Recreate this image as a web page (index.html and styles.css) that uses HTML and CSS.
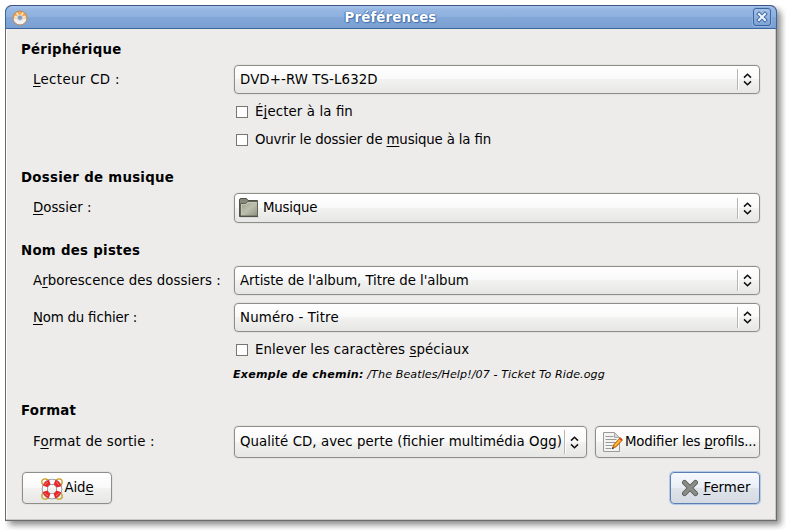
FILE: index.html
```html
<!DOCTYPE html>
<html lang="fr">
<head>
<meta charset="utf-8">
<title>Préférences</title>
<link rel="stylesheet" href="styles.css">
</head>
<body>
<svg width="0" height="0" class="defs" aria-hidden="true">
  <defs>
    <symbol id="arrows" viewBox="0 0 9 13"><path d="M1 4.600 4.500 1.200 8 4.600M1 8.400l3.500 3.400L8 8.400" fill="none" stroke="#111" stroke-width="1.500"/></symbol>
    <linearGradient id="folderFill" x1="0" y1="0" x2="1" y2="1"><stop offset="0" stop-color="#9b9d8a"/><stop offset=".5" stop-color="#bdbfae"/><stop offset="1" stop-color="#8f917f"/></linearGradient>
    <linearGradient id="discFill" x1="0" y1="0" x2="0" y2="1"><stop offset=".4" stop-color="#f7a94c"/><stop offset=".62" stop-color="#f4f2ee"/></linearGradient>
  </defs>
</svg>
<div class="window">
  <header class="titlebar">
    <svg class="app-icon" viewBox="0 0 16 16"><circle cx="8" cy="8" r="7" fill="url(#discFill)" stroke="#b8865a"/><path d="M2.500 6.500 8 8 4.500 2.800M11 2.500 8 8l5.500-1.500" fill="none" stroke="#fff0d8" stroke-width="1.400"/><circle cx="8" cy="7.700" r="2.600" fill="#7f9dc0" stroke="#d3d9df"/></svg>
    <h1>Préférences</h1>
    <button class="close" aria-label="Fermer"><svg viewBox="0 0 12 12"><path d="M3 3l6 6M9 3 3 9" stroke="#3d66a0" stroke-width="4" stroke-linecap="square"/><path d="M3 3l6 6M9 3 3 9" stroke="#eef4fc" stroke-width="2.200" stroke-linecap="square"/></svg></button>
  </header>
  <main class="content">
    <section>
      <h2>Périphérique</h2>
      <div class="row"><label class="t-cd"><u>L</u>ecteur CD :</label><div class="combo"><span class="t-dvd">DVD+-RW TS-L632D</span><i></i><svg class="arrows"><use href="#arrows"/></svg></div></div>
      <div class="check"><b></b><span class="t-eject">É<u>j</u>ecter à la <em>fi</em>n</span></div>
      <div class="check second"><b></b><span class="t-open">Ouvrir le dossier de <u>m</u>usique à la <em>fi</em>n</span></div>
    </section>
    <section>
      <h2>Dossier de musique</h2>
      <div class="row folder-row"><label><u>D</u>ossier :</label><div class="combo with-icon">
        <svg class="folder" viewBox="0 0 20 20"><path d="M1 19h19" stroke="#999" opacity=".5"/><path d="M.5 18.500V2q0-1.500 1.500-1.500h5.500L9 2.500h9.500v16z" fill="#85877a" stroke="#50524a"/><path d="M1.500 18V5.500h5l2-2h10V18z" fill="url(#folderFill)" stroke="#606256"/><path d="M2.500 17V6.500h4.500l2-2h8.500" fill="none" stroke="#c9cbbb" opacity=".8"/><path d="M.5 18.500h18" stroke="#50524a"/></svg>
        <span class="t-music">Musique</span><i></i><svg class="arrows"><use href="#arrows"/></svg></div></div>
    </section>
    <section class="tracks">
      <h2>Nom des pistes</h2>
      <div class="row"><label class="t-tree">A<u>r</u>borescence des dossiers :</label><div class="combo"><span class="t-artist">Artiste de l'album, Titre de l'album</span><i></i><svg class="arrows"><use href="#arrows"/></svg></div></div>
      <div class="row next"><label class="t-file"><u>N</u>om du <em>fi</em>chier :</label><div class="combo"><span class="t-num">Numéro - Titre</span><i></i><svg class="arrows"><use href="#arrows"/></svg></div></div>
      <div class="check third"><b></b><span class="t-strip">Enlever les caractères <u>s</u>péciaux</span></div>
      <p class="example"><strong>Exemple de chemin:</strong> /The Beatles/Help!/07 - Ticket To Ride.ogg</p>
    </section>
    <section>
      <h2>Format</h2>
      <div class="row format-row"><label class="t-out">F<u>o</u>rmat de sortie :</label><div class="combo"><span class="t-quality">Qualité CD, avec perte (<em>fi</em>chier multimédia Ogg)</span><i></i><svg class="arrows"><use href="#arrows"/></svg></div>
        <button class="btn edit"><svg class="edit-icon" viewBox="0 0 22 22"><path d="M2.500 1.500h11l5 5v14h-16z" fill="#f4f4f2" stroke="#999b97" stroke-linejoin="round"/><path d="M13.500 1.500v5h5z" fill="#d5d6d3" stroke="#aaa"/><path d="M4.500 5.500h8M4.500 8.500h11M4.500 11.500h10M4.500 14.500h8M4.500 17.500h6" stroke="#999b97"/><path d="m11.500 17.500 1.300-4 6-6.500 2.500 2.200-6 6.500z" fill="#f58b12" stroke="#b45a0a" stroke-width=".8"/><path d="m14 14.500 5-5.500" stroke="#ffc65a" stroke-width="1.200"/><path d="m18 7.500 1.300-1.300 2.400 2.200-1.200 1.400z" fill="#d33c1c"/><path d="m11 18.200 2-.9-1.300-1.200z" fill="#222"/></svg><span class="t-edit">Modi<em>fi</em>er les <u>p</u>ro<em>fi</em>ls...</span></button></div>
    </section>
    <footer>
      <button class="btn help"><svg class="help-icon" viewBox="0 0 22 22"><g fill="none" stroke="#c99b12" stroke-width="1.300"><circle cx="4" cy="4" r="3.200"/><circle cx="18" cy="4" r="3.200"/><circle cx="4" cy="18" r="3.200"/><circle cx="18" cy="18" r="3.200"/></g><circle cx="11" cy="11" r="7.300" fill="none" stroke="#8d8d8d" stroke-width="6"/><circle cx="11" cy="11" r="7.300" fill="none" stroke="#fafafa" stroke-width="4.400"/><circle cx="11" cy="11" r="7.300" fill="none" stroke="#e8262a" stroke-width="5" stroke-dasharray="6.600 4.867" stroke-dashoffset="-2.430"/><path d="M4 6.800l2.800-2.800M15.200 4l2.800 2.800M4 15.200l2.800 2.800M15.200 18l2.800-2.800" stroke="#f7908c" stroke-width=".9"/></svg><span class="t-help">Aid<u>e</u></span></button>
      <button class="btn primary"><svg class="x-icon" viewBox="0 0 18 18"><path d="m3.500 3.500 11 11m0-11-11 11" stroke="#5b5d58" stroke-width="5" stroke-linecap="round"/><path d="m3.500 3.500 11 11m0-11-11 11" stroke="#8a8c86" stroke-width="3.200" stroke-linecap="round"/></svg><span><u>F</u>ermer</span></button>
    </footer>
  </main>
</div>
</body>
</html>
```
FILE: styles.css
```css
* { box-sizing: border-box; }
body {
  margin: 0;
  padding: 5px;
  height: 530px;
  overflow: hidden;
  background: #fff;
  font: 13.33px/18px "DejaVu Sans", sans-serif;
  color: #000;
}
.defs { position: absolute; }
u { text-decoration: underline; text-decoration-thickness: 1px; text-underline-offset: 2px; text-decoration-skip-ink: none; }
/* keeps the fi ligature inside letter-spaced labels */
em { font-style: normal; letter-spacing: 0; }
.window {
  width: 772px;
  height: 516px;
  border: 1px solid #6b6b69;
  border-top: 0;
  border-radius: 7px 7px 0 0;
  background: #edeceb;
  box-shadow: 4px 4px 6px rgba(0, 0, 0, .45), inset -1px -1px #cbc9c7, inset 1px 0 #fff;
  clip-path: inset(0 -20px -20px 0);
}
.titlebar {
  display: flex;
  align-items: center;
  height: 24px;
  margin: 0 -1px;
  padding: 0 5px 0 6px;
  border: 1px solid #3b659f;
  border-top-color: #395682;
  border-radius: 7px 7px 0 0;
  background: linear-gradient(#a9c5ec 0, #98b8e3 3px, #8db0de 48%, #82a7d7 52%, #7a9fd1);
}
.app-icon { width: 16px; height: 16px; margin-top: 1px; }
h1 {
  flex: 1;
  margin: 1px 0 0;
  text-align: center;
  font-size: 13.33px;
  line-height: 20px;
  letter-spacing: .15px;
  color: #fff;
  text-shadow: 0 0 1px #3c66a2, 1px 1px 1px #4570ac, -1px 0 1px #4f7ab4;
}
.close {
  display: grid;
  place-items: center;
  width: 18px;
  height: 18px;
  padding: 0;
  border: 1px solid #3b659f;
  border-radius: 3px;
  background: linear-gradient(#a4c0e8, #7ea3d4);
  box-shadow: 0 0 0 1px #8fb2e0;
}
.close svg { width: 12px; height: 12px; }
.content { padding: 12px 16px 0 15px; }
section + section { margin-top: 20px; }
section.tracks { margin-top: 19px; }
h2 { margin: 0 0 6px; font-size: 13.33px; line-height: 18px; letter-spacing: .28px; }
.row { display: flex; height: 29px; }
.next { margin-top: 8px; }
.folder-row { height: 30px; }
.format-row { height: 32px; }
.row label { flex: 0 0 213px; padding-left: 12px; align-self: center; white-space: nowrap; }
.combo {
  display: flex;
  flex: 1;
  align-items: center;
  padding: 0 7px 0 5px;
  border: 1px solid #8e8d8a;
  border-radius: 4px;
  background: linear-gradient(#fff, #f9f9f9 50%, #f2f2f1 50%, #e6e6e4);
  box-shadow: 0 0 0 1px #e3e2e0;
  white-space: nowrap;
}
.combo > span { flex: 1; }
.combo i { width: 1px; height: 21px; background: #b8b6b3; margin-right: 5px; box-shadow: 1px 0 #fff; }
.format-row .combo i { height: 24px; }
.arrows { width: 9px; height: 13px; }
.with-icon { padding-left: 4px; }
.folder { width: 20px; height: 20px; margin-right: 4px; }
.check { display: flex; align-items: center; height: 18px; margin: 9px 0 0 215px; }
.check.second { margin-top: 10px; }
.check.third { margin-top: 9px; }
.check b { width: 12px; height: 12px; margin-right: 7px; border: 1px solid #767572; background: #fff; }
.example { margin: 8px 0 -1px 212px; font-size: 11.1px; line-height: 16px; font-style: italic; letter-spacing: .1px; white-space: nowrap; }
.example strong { letter-spacing: .26px; }
.btn {
  display: flex;
  align-items: center;
  justify-content: center;
  height: 32px;
  padding: 0;
  border: 1px solid #8e8d8a;
  border-radius: 4px;
  background: linear-gradient(#fff, #f9f9f9 50%, #f2f2f1 50%, #e6e6e4);
  box-shadow: 0 0 0 1px #e3e2e0;
  font: inherit;
  color: #000;
  white-space: nowrap;
}
.edit { width: 165px; margin-left: 8px; justify-content: flex-start; padding-left: 5px; }
.edit-icon, .help-icon { width: 22px; height: 22px; margin-right: 2px; }
.help-icon { margin-top: 1px; }
footer { display: flex; justify-content: space-between; margin: 14px 0 0 1px; }
footer .btn { width: 90px; }
.primary {
  border-color: #5b7fb3;
  background: linear-gradient(#f6f9fe, #e9eef6 50%, #dfe3ea 50%, #d5d9e1);
  box-shadow: 0 0 0 1px #b6c9e4;
}
.btn.primary { padding-left: 2px; }
.x-icon { width: 18px; height: 18px; margin-right: 4px; }

/* per-label tracking */
.t-cd { letter-spacing: .36px; }
.t-dvd { letter-spacing: .1px; }
.t-eject { letter-spacing: .12px; }
.t-open { letter-spacing: -.16px; }
.t-music { letter-spacing: -.2px; }
.t-tree { letter-spacing: .04px; }
.t-artist { letter-spacing: -.06px; }
.t-file { letter-spacing: -.2px; }
.t-num { letter-spacing: .18px; }
.t-strip { letter-spacing: .1px; }
.t-out { letter-spacing: .17px; }
.t-quality { letter-spacing: .06px; }
.t-edit { letter-spacing: -.18px; }
.t-help { letter-spacing: -.15px; }
```
